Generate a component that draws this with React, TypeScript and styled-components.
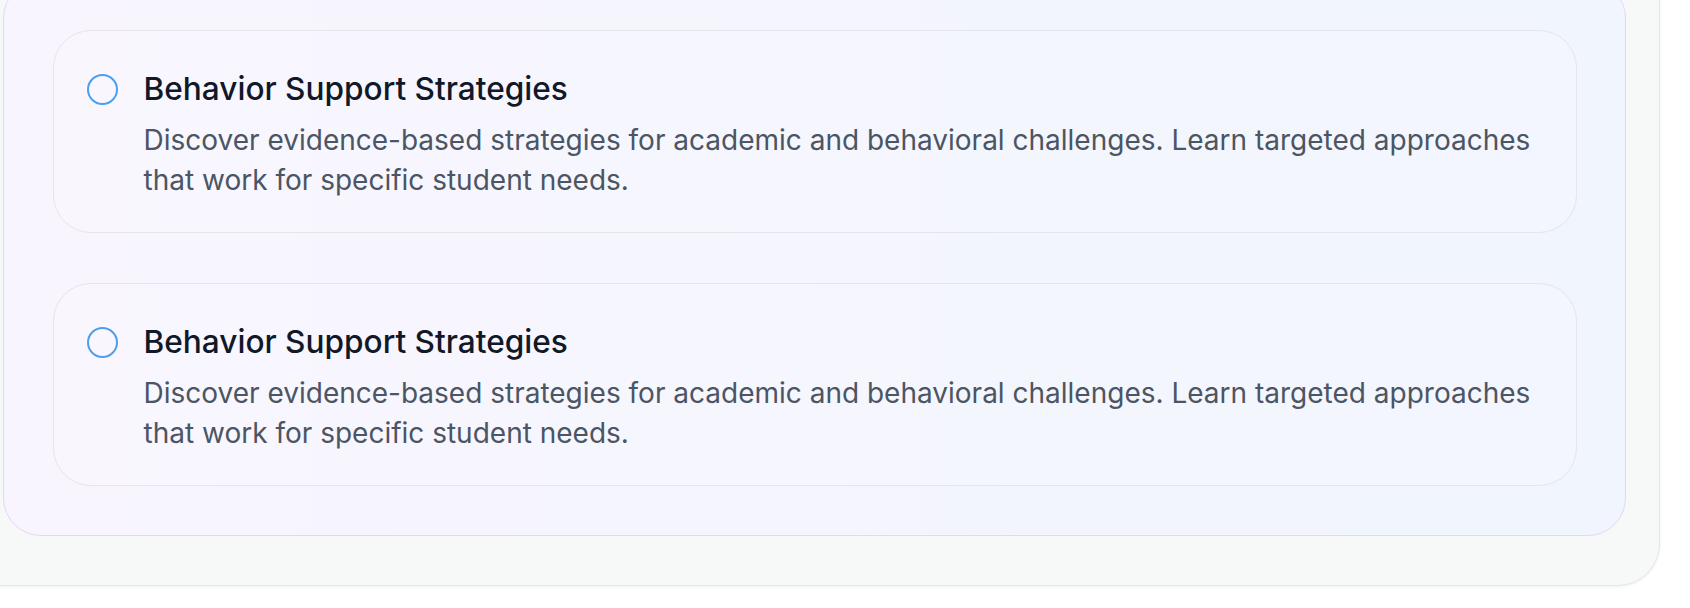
import React from "react";
import styled, { createGlobalStyle } from "styled-components";

const Global = createGlobalStyle`
  html, body { margin: 0; padding: 0; background: #ffffff; }
  body { font-family: Inter, "Noto Sans", "Liberation Sans", sans-serif; overflow: hidden; }
  * { box-sizing: border-box; }
`;

const Page = styled.div`
  margin: -40px 0 0 -40px;
  padding: 0 30px 22px 0;
`;

const OuterPanel = styled.section`
  background: #f7f8f8;
  border: 1.5px solid #e2e7eb;
  border-radius: 42px;
  padding: 19px 33px 49px 41.5px;
  box-shadow: 0 1px 3px rgba(15, 23, 42, 0.06);
`;

const Group = styled.div`
  background: linear-gradient(90deg, #f8f5fe 0%, #f4f5fe 50%, #f0f5fe 100%);
  border: 1.5px solid #e4d5fc;
  border-radius: 38px;
  padding: 48.5px 48px 49px 49.5px;
  display: flex;
  flex-direction: column;
  gap: 50px;
`;

const Card = styled.div`
  display: flex;
  align-items: flex-start;
  gap: 26px;
  border: 1.5px solid #e5e5ea;
  border-radius: 38px;
  background: rgba(255, 255, 255, 0.15);
  padding: 37px 32px 31px 32.5px;
  height: 203px;
`;

const Radio = styled.span`
  flex: none;
  width: 31px;
  height: 31px;
  margin-top: 6px;
  border-radius: 50%;
  border: 2px solid #4a9ff0;
`;

const Body = styled.div`
  display: flex;
  flex-direction: column;
  gap: 10px;
  min-width: 0;
`;

const Title = styled.h3`
  margin: 0;
  font-size: 31.6px;
  line-height: 42px;
  font-weight: 500;
  color: #111827;
`;

const Description = styled.p`
  margin: 0;
  font-size: 28px;
  line-height: 40px;
  font-weight: 400;
  color: #4b5563;
`;

const items = [
  {
    title: "Behavior Support Strategies",
    text:
      "Discover evidence-based strategies for academic and behavioral challenges. Learn targeted approaches that work for specific student needs.",
  },
  {
    title: "Behavior Support Strategies",
    text:
      "Discover evidence-based strategies for academic and behavioral challenges. Learn targeted approaches that work for specific student needs.",
  },
];

export default function App() {
  return (
    <>
      <Global />
      <Page>
        <OuterPanel>
          <Group>
            {items.map((it, i) => (
              <Card key={i}>
                <Radio />
                <Body>
                  <Title>{it.title}</Title>
                  <Description>{it.text}</Description>
                </Body>
              </Card>
            ))}
          </Group>
        </OuterPanel>
      </Page>
    </>
  );
}
